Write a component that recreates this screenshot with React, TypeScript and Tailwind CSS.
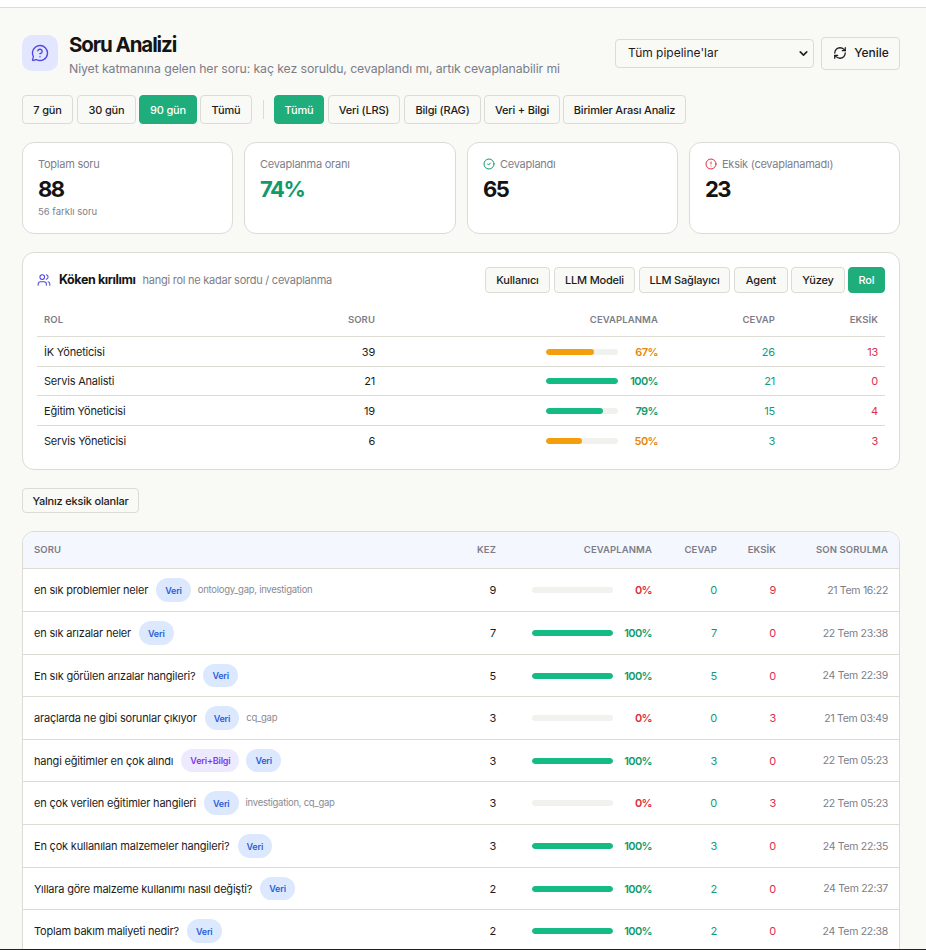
import { CircleCheck, CircleAlert, MessageCircleQuestion, RefreshCw, Users, ChevronDown } from "lucide-react";

const F = "[font-family:'Inter','Liberation_Sans',sans-serif]";

function Btn({ label, active, className = "" }: { label: string; active?: boolean; className?: string }) {
  return (
    <div
      className={
        "flex items-center justify-center rounded-[4px] border pt-px text-[11px] font-medium tracking-[-0.2px] " +
        (active ? "border-[#20ad7c] bg-[#20ad7c] text-white " : "border-[#dcdbd4] bg-[#f9f9f6] text-[#1c1c1c] ") +
        className
      }
    >
      {label}
    </div>
  );
}

function Stat({ label, value, sub, icon, green }: { label: string; value: string; sub?: string; icon?: React.ReactNode; green?: boolean }) {
  return (
    <div className="h-[92px] rounded-[12px] border border-[#dcdbd4] bg-white pl-[15px] pt-[13px]">
      <div className="flex h-[16px] items-center gap-[5px] text-[11px] tracking-[-0.25px] text-[#80808a]">
        {icon}
        {label}
      </div>
      <div className={"mt-[3px] text-[22px] leading-[29px] font-bold tracking-[-1.5px] " + (green ? "text-[#129a6c]" : "text-[#141414]")}>{value}</div>
      {sub && <div className="mt-[1px] text-[9.5px] leading-[13px] text-[#80808a]">{sub}</div>}
    </div>
  );
}

function barColor(p: number) {
  return p >= 70 ? "bg-[#14bb84]" : "bg-[#f59e0b]";
}
function pctColor(p: number) {
  if (p >= 70) return "text-[#129a6c]";
  if (p >= 50) return "text-[#e6850a]";
  return "text-[#e02d3c]";
}

const roles = [
  { n: "İK Yöneticisi", s: 39, p: 67, c: 26, e: 13, h: "h-[30px]" },
  { n: "Servis Analisti", s: 21, p: 100, c: 21, e: 0, h: "h-[29px]" },
  { n: "Eğitim Yöneticisi", s: 19, p: 79, c: 15, e: 4, h: "h-[30px]" },
  { n: "Servis Yöneticisi", s: 6, p: 50, c: 3, e: 3, h: "h-[29px]" },
];

function RoleRow({ r, last }: { r: (typeof roles)[number]; last: boolean }) {
  return (
    <div className={"flex items-center text-[11px] tracking-[-0.2px] " + r.h + (last ? "" : " border-b border-[#dcdbd4]")}>
      <div className="ml-[7px] w-[200px] pt-px text-[#1c1c1c]">{r.n}</div>
      <div className="w-[131px] pt-px text-right text-[#1c1c1c]">{r.s}</div>
      <div className="ml-[171px] h-[6px] w-[72px] overflow-hidden rounded-full bg-[#f1f1ed]">
        <div className={"h-full rounded-full " + barColor(r.p)} style={{ width: r.p + "%" }} />
      </div>
      <div className={"w-[40px] pt-px text-right font-semibold tracking-[-0.6px] " + pctColor(r.p)}>{r.p}%</div>
      <div className="w-[117px] pt-px text-right text-[#129a7c]">{r.c}</div>
      <div className="w-[103px] pt-px text-right text-[#e02d50]">{r.e}</div>
    </div>
  );
}

const rows = [
  { q: "en sık problemler neler", tags: ["Veri"], note: "ontology_gap, investigation", k: 9, p: 0, c: 0, e: 9, d: "21 Tem 16:22", h: "h-[43px]" },
  { q: "en sık arızalar neler", tags: ["Veri"], k: 7, p: 100, c: 7, e: 0, d: "22 Tem 23:38", h: "h-[43px]" },
  { q: "En sık görülen arızalar hangileri?", tags: ["Veri"], k: 5, p: 100, c: 5, e: 0, d: "24 Tem 22:39", h: "h-[42px]" },
  { q: "araçlarda ne gibi sorunlar çıkıyor", tags: ["Veri"], note: "cq_gap", k: 3, p: 0, c: 0, e: 3, d: "21 Tem 03:49", h: "h-[43px]" },
  { q: "hangi eğitimler en çok alındı", tags: ["Veri+Bilgi", "Veri"], k: 3, p: 100, c: 3, e: 0, d: "22 Tem 05:23", h: "h-[42px]" },
  { q: "en çok verilen eğitimler hangileri", tags: ["Veri"], note: "investigation, cq_gap", k: 3, p: 0, c: 0, e: 3, d: "22 Tem 05:23", h: "h-[43px]" },
  { q: "En çok kullanılan malzemeler hangileri?", tags: ["Veri"], k: 3, p: 100, c: 3, e: 0, d: "24 Tem 22:35", h: "h-[43px]" },
  { q: "Yıllara göre malzeme kullanımı nasıl değişti?", tags: ["Veri"], k: 2, p: 100, c: 2, e: 0, d: "24 Tem 22:37", h: "h-[42px]" },
  { q: "Toplam bakım maliyeti nedir?", tags: ["Veri"], k: 2, p: 100, c: 2, e: 0, d: "24 Tem 22:38", h: "h-[43px]" },
];

function Tag({ t }: { t: string }) {
  const purple = t !== "Veri";
  return (
    <span
      className={
        "flex h-[23.5px] items-center rounded-full px-[9px] pt-px text-[9px] font-semibold tracking-[-0.2px] " +
        (purple ? "bg-[#ede9fe] text-[#7c3aed]" : "bg-[#dbe8fe] text-[#2f5fd8]")
      }
    >
      {t}
    </span>
  );
}

const th = "text-[9.5px] font-semibold tracking-[0.1px] text-[#7d7d87]";

export default function App() {
  return (
    <div className={"relative h-[950px] overflow-hidden bg-[#f9f9f6] " + F}>
      <div className="h-[8px] border-b border-[#dcdbd4] bg-white" />
      <div className="pl-[22px] pr-[26px]">
        <div className="flex h-[87px] items-start pt-[27px]">
          <div className="flex h-[36px] w-[36px] items-center justify-center rounded-[10px] bg-[#e2e6ff]">
            <MessageCircleQuestion size={18} strokeWidth={1.8} className="text-[#4f46e5]" />
          </div>
          <div className="ml-[11px] -mt-[2px] min-w-0">
            <div className="text-[20.5px] leading-[24px] font-bold tracking-[-1.1px] text-[#141414]">Soru Analizi</div>
            <div className="mt-[3px] text-[12.3px] leading-[18px] tracking-[-0.1px] text-[#7d7d87]">
              Niyet katmanına gelen her soru: kaç kez soruldu, cevaplandı mı, artık cevaplanabilir mi
            </div>
          </div>
          <div className="ml-auto mt-[2px] flex items-center gap-[7px]">
            <div className="flex h-[29px] w-[199px] items-center justify-between rounded-[4px] border border-[#dcdbd4] bg-[#f9f9f6] pb-px pl-[12px] pr-[3px] text-[12px] text-[#1c1c1c]">
              Tüm pipeline'lar
              <ChevronDown size={13} strokeWidth={3} className="text-[#222]" />
            </div>
            <div className="flex h-[33px] w-[79px] items-center justify-center gap-[7px] rounded-[4px] border border-[#dcdbd4] bg-[#f9f9f6] pb-px pl-px text-[12px] font-medium text-[#1c1c1c]">
              <RefreshCw size={14} strokeWidth={2.2} />
              Yenile
            </div>
          </div>
        </div>

        <div className="flex h-[29px] items-stretch">
          <Btn label="7 gün" className="w-[51px]" />
          <Btn label="30 gün" className="ml-[4px] w-[59px]" />
          <Btn label="90 gün" active className="ml-[3px] w-[58px]" />
          <Btn label="Tümü" className="ml-[3px] w-[52px]" />
          <div className="my-[5px] ml-[11px] mr-[10px] w-px bg-[#dcdbd4]" />
          <Btn label="Tümü" active className="w-[50px]" />
          <Btn label="Veri (LRS)" className="ml-[4px] w-[72px]" />
          <Btn label="Bilgi (RAG)" className="ml-[4px] w-[77px]" />
          <Btn label="Veri + Bilgi" className="ml-[3px] w-[76px]" />
          <Btn label="Birimler Arası Analiz" className="ml-[3px] w-[123px]" />
        </div>

        <div className="mt-[18px] grid grid-cols-[211px_212px_211px_211px] gap-x-[11px]">
          <Stat label="Toplam soru" value="88" sub="56 farklı soru" />
          <Stat label="Cevaplanma oranı" value="74%" green />
          <Stat label="Cevaplandı" value="65" icon={<CircleCheck size={12} className="text-[#129a6c]" />} />
          <Stat label="Eksik (cevaplanamadı)" value="23" icon={<CircleAlert size={12} className="text-[#e02d3c]" />} />
        </div>

        <div className="mt-[18px] h-[218px] rounded-[12px] border border-[#dcdbd4] bg-white px-[14px] pt-[14px]">
          <div className="flex h-[26px] items-center">
            <Users size={14} strokeWidth={1.8} className="text-[#4f46e5]" />
            <span className="ml-[8px] text-[12.5px] font-bold tracking-[-0.4px] text-[#141414]">Köken kırılımı</span>
            <span className="ml-[7px] pt-px text-[11px] tracking-[-0.25px] text-[#7d7d87]">hangi rol ne kadar sordu / cevaplanma</span>
            <div className="ml-auto flex h-[26px] items-stretch">
              <Btn label="Kullanıcı" className="w-[65px]" />
              <Btn label="LLM Modeli" className="ml-[4px] w-[81px]" />
              <Btn label="LLM Sağlayıcı" className="ml-[4px] w-[91px]" />
              <Btn label="Agent" className="ml-[4px] w-[54px]" />
              <Btn label="Yüzey" className="ml-[3px] w-[54px]" />
              <Btn label="Rol" active className="ml-[3px] w-[37px]" />
            </div>
          </div>
          <div className="mt-[8px] flex h-[36px] items-center border-b border-[#dcdbd4] pt-[4px]">
            <div className={"ml-[7px] w-[200px] " + th}>ROL</div>
            <div className={"w-[131px] text-right " + th}>SORU</div>
            <div className={"w-[283px] text-right " + th}>CEVAPLANMA</div>
            <div className={"w-[117px] text-right " + th}>CEVAP</div>
            <div className={"w-[103px] text-right " + th}>EKSİK</div>
          </div>
          {roles.map((r, i) => (
            <RoleRow key={r.n} r={r} last={i === roles.length - 1} />
          ))}
        </div>

        <Btn label="Yalnız eksik olanlar" className="mt-[18px] h-[25px] w-[117px]" />

        <div className="mt-[18px] overflow-hidden rounded-t-[12px] border border-[#dcdbd4] bg-white">
          <div className="flex h-[37px] items-center border-b border-[#dcdbd4] bg-[#f4f7fe] pl-[11px] pt-px">
            <div className={"w-[420px] " + th}>SORU</div>
            <div className={"w-[42px] text-right " + th}>KEZ</div>
            <div className={"w-[156px] text-right " + th}>CEVAPLANMA</div>
            <div className={"w-[65px] text-right " + th}>CEVAP</div>
            <div className={"w-[59px] text-right " + th}>EKSİK</div>
            <div className={"w-[112px] text-right " + th}>SON SORULMA</div>
          </div>
          {rows.map((r) => (
            <div key={r.q} className={"flex items-center border-b border-[#dcdbd4] pl-[11px] text-[11px] tracking-[-0.2px] " + r.h}>
              <div className="flex w-[420px] items-center gap-[7px] text-[#1c1c1c]">
                <span className="mr-px pt-px">{r.q}</span>
                {r.tags.map((t) => (
                  <Tag key={t} t={t} />
                ))}
                {r.note && <span className="pt-[1px] text-[9.5px] tracking-[-0.27px] text-[#8a8a93]">{r.note}</span>}
              </div>
              <div className="w-[42px] pt-px text-right text-[#1c1c1c]">{r.k}</div>
              <div className="ml-[36px] h-[6px] w-[81px] overflow-hidden rounded-full bg-[#f1f1ed]">
                <div className={"h-full rounded-full " + barColor(r.p)} style={{ width: r.p + "%" }} />
              </div>
              <div className={"w-[39px] pt-px text-right font-semibold tracking-[-0.6px] " + pctColor(r.p)}>{r.p}%</div>
              <div className="w-[65px] pt-px text-right text-[#129a7c]">{r.c}</div>
              <div className="w-[59px] pt-px text-right text-[#e02d50]">{r.e}</div>
              <div className="w-[112px] pt-px text-right text-[10.5px] tracking-[-0.3px] text-[#7d7d87]">{r.d}</div>
            </div>
          ))}
        </div>
      </div>
      <div className="absolute inset-x-0 bottom-0 h-px bg-[#222222]" />
    </div>
  );
}
